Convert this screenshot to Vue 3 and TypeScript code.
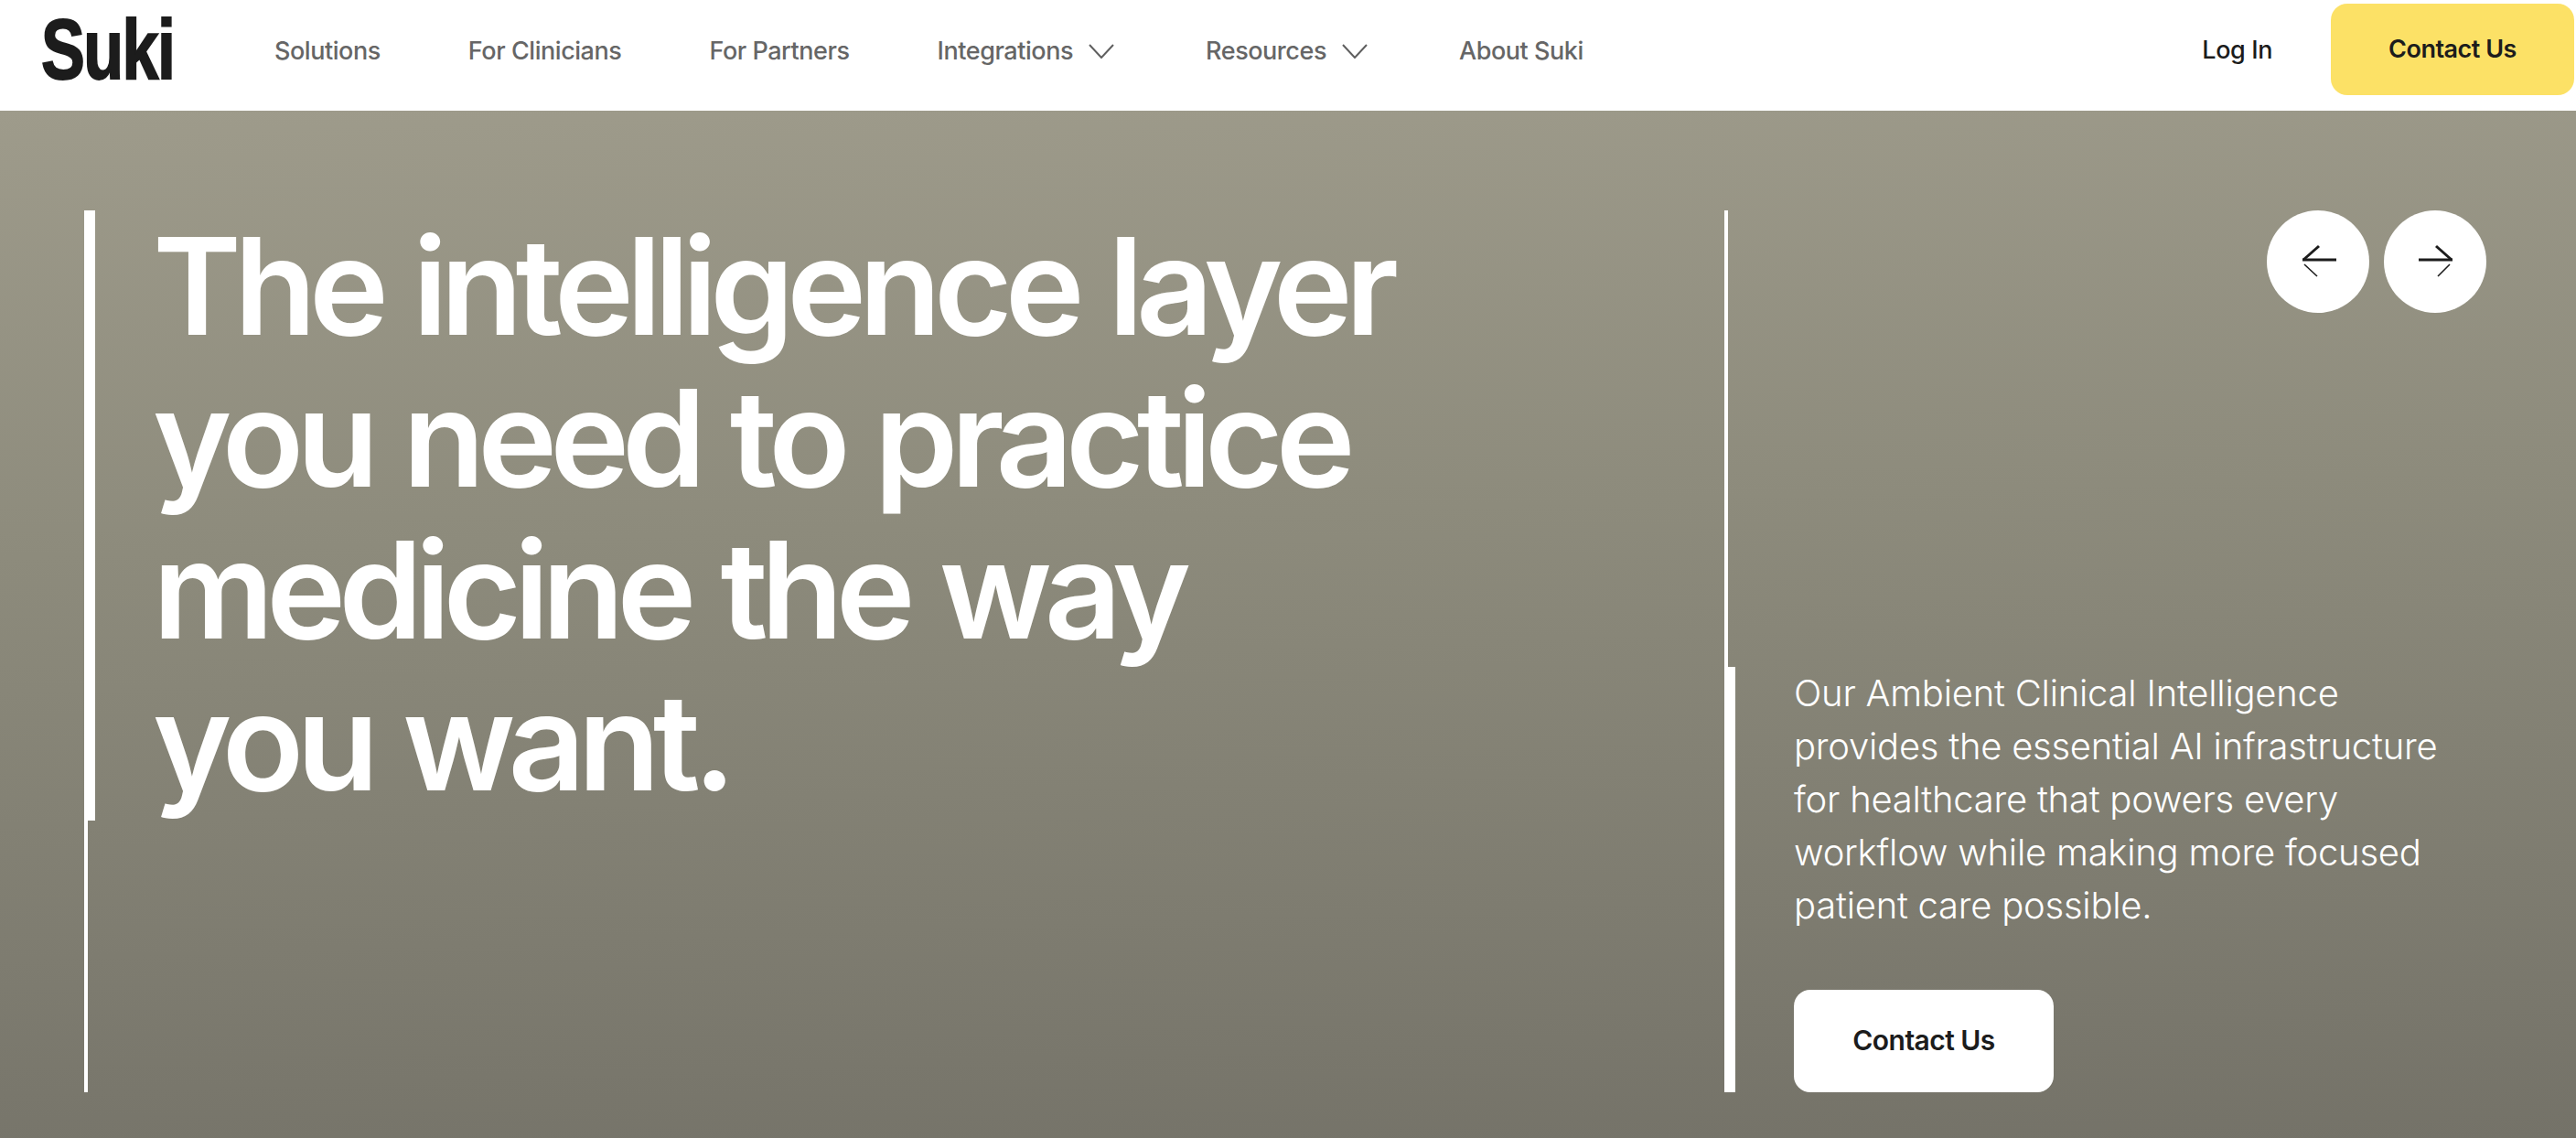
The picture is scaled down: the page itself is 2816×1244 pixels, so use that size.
<script setup lang="ts">
const links = [
  { label: 'Solutions', caret: false },
  { label: 'For Clinicians', caret: false },
  { label: 'For Partners', caret: false },
  { label: 'Integrations', caret: true },
  { label: 'Resources', caret: true },
  { label: 'About Suki', caret: false },
]
</script>

<template>
  <div class="page">
    <header class="top">
      <a class="logo"><span class="logo-text">Suki</span></a>
      <nav class="nav">
        <a v-for="l in links" :key="l.label" class="nav-item">
          {{ l.label }}
          <svg v-if="l.caret" class="caret" width="28" height="16" viewBox="0 0 28 16" fill="none">
            <path d="M1 1 L14 15 L27 1" stroke="#5f5f5f" stroke-width="2" />
          </svg>
        </a>
      </nav>
      <div class="actions">
        <a class="login">Log In</a>
        <a class="btn yellow">Contact Us</a>
      </div>
    </header>
    <main class="hero">
      <section class="col-left">
        <h1 class="title">The intelligence layer<br />you need to practice<br />medicine the way<br />you want.</h1>
      </section>
      <section class="col-right">
        <div class="arrows">
          <button class="round" aria-label="Previous">
            <svg width="40" height="38" viewBox="0 0 40 38" fill="none">
              <path d="M3 17 H40" stroke="#1c1c1c" stroke-width="3" />
              <path d="M21 2 L4 17" stroke="#1c1c1c" stroke-width="3" />
              <path d="M5 22 L19 35" stroke="#1c1c1c" stroke-width="1.6" />
            </svg>
          </button>
          <button class="round" aria-label="Next">
            <svg width="40" height="38" viewBox="0 0 40 38" fill="none">
              <path d="M2 17 H39" stroke="#1c1c1c" stroke-width="3" />
              <path d="M21 2 L38 17" stroke="#1c1c1c" stroke-width="3" />
              <path d="M36 22 L23 35" stroke="#1c1c1c" stroke-width="1.6" />
            </svg>
          </button>
        </div>
        <div class="intro">
          <p class="copy">Our Ambient Clinical Intelligence provides the essential AI infrastructure for healthcare that powers every workflow while making more focused patient care possible.</p>
          <a class="btn white">Contact Us</a>
        </div>
      </section>
    </main>
  </div>
</template>

<style scoped>
.page {
  width: 2816px;
  height: 1244px;
  display: flex;
  flex-direction: column;
  font-family: Inter, "Liberation Sans", sans-serif;
  background: #fff;
}
.top {
  height: 121px;
  flex: none;
  display: flex;
  align-items: center;
  padding: 0 2px 0 45px;
  box-sizing: border-box;
}
.logo {
  width: 143px;
  flex: none;
  height: 68px;
  margin-top: -14px;
  overflow: visible;
}
.logo-text {
  display: block;
  font-family: "Liberation Sans", Arial, sans-serif;
  font-weight: 700;
  font-size: 92px;
  line-height: 68px;
  letter-spacing: -2px;
  color: #1c1c1c;
  transform: scaleX(0.78);
  transform-origin: left center;
  -webkit-text-stroke: 2px #1c1c1c;
}
.nav {
  display: flex;
  align-items: center;
  margin-left: 112px;
  gap: 96px;
  height: 100%;
  margin-top: -10px;
}
.nav-item {
  display: flex;
  align-items: center;
  gap: 17px;
  font-size: 27px;
  font-weight: 500;
  letter-spacing: -0.45px;
  color: #666;
  white-space: nowrap;
}
.caret {
  flex: none;
  margin-right: 4px;
}
.actions {
  margin-left: auto;
  display: flex;
  align-items: center;
  gap: 64px;
  margin-top: -13px;
}
.login {
  font-size: 27px;
  font-weight: 500;
  letter-spacing: -0.4px;
  color: #1c1c1c;
}
.btn {
  display: flex;
  align-items: center;
  justify-content: center;
  font-weight: 560;
  color: #1c1c1c;
  border-radius: 18px;
  box-sizing: border-box;
}
.yellow {
  width: 266px;
  height: 100px;
  background: #fce166;
  padding-bottom: 2px;
  font-size: 27px;
  letter-spacing: -0.5px;
}
.white {
  width: 284px;
  height: 112px;
  background: #fff;
  padding-bottom: 2px;
  font-size: 30px;
  letter-spacing: -0.55px;
}
.hero {
  flex: 1;
  display: flex;
  justify-content: flex-start;
  padding: 109px 98px 50px 92px;
  background: linear-gradient(178deg, #9e9b8b 0%, #8d8b7c 40%, #747268 100%);
}
.col-left {
  width: 1793px;
  flex: none;
  border-left: 4px solid #fff;
  box-sizing: border-box;
}
.title {
  margin: 0 0 0 -4px;
  height: 667px;
  box-sizing: border-box;
  width: 1500px;
  border-left: 12px solid #fff;
  padding: 0 0 0 63px;
  font-size: 147px;
  line-height: 166px;
  font-weight: 560;
  letter-spacing: -8px;
  word-spacing: 5px;
  color: #fff;
  white-space: nowrap;
}
.col-right {
  flex: 1;
  border-left: 4px solid #fff;
  display: flex;
  flex-direction: column;
  justify-content: space-between;
}
.arrows {
  display: flex;
  justify-content: flex-end;
  gap: 16px;
}
.round {
  width: 112px;
  height: 112px;
  border: none;
  border-radius: 50%;
  background: #fff;
  padding: 0;
  display: flex;
  align-items: center;
  justify-content: center;
}
.intro {
  margin-left: -4px;
  height: 465px;
  box-sizing: border-box;
  border-left: 12px solid #fff;
  padding-left: 64px;
  display: flex;
  flex-direction: column;
  justify-content: space-between;
  align-items: flex-start;
}
.copy {
  margin: 0;
  width: 720px;
  font-size: 40px;
  line-height: 58px;
  font-weight: 360;
  letter-spacing: -0.25px;
  color: #fff;
}
</style>

<style>
html, body {
  margin: 0;
  overflow: hidden;
}
</style>
